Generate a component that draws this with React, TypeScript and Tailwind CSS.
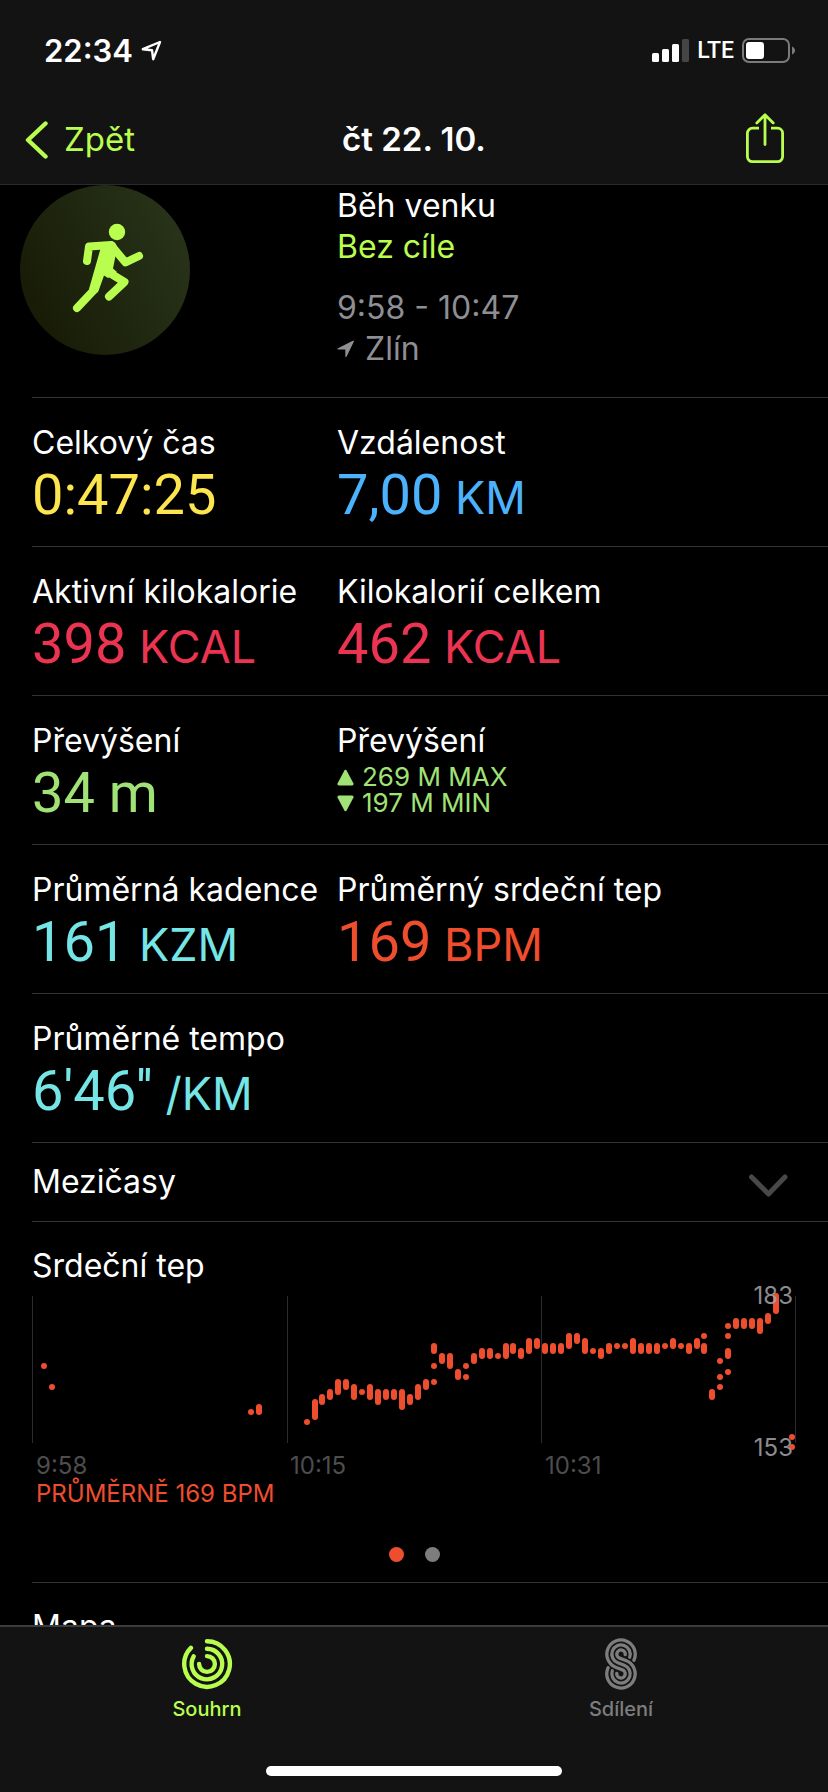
import type { ReactNode } from 'react';

interface Metric {
  label: string;
  value: string;
  unit?: string;
  color: string;
}

// [x, top, bottom] of every heart rate sample range
const HEART_RATE: [number, number, number][] = [
  [12, 77, 83], [20, 98, 104], [219, 123, 129], [227, 118, 129],
  [275, 133, 139], [283, 113, 134], [290, 108, 119], [298, 103, 114],
  [306, 93, 109], [314, 93, 104], [322, 98, 114], [330, 103, 109],
  [338, 98, 114], [346, 103, 119], [354, 103, 114], [362, 103, 114],
  [370, 103, 124], [378, 108, 119], [386, 98, 114], [394, 93, 104],
  [402, 93, 99], [402, 77, 83], [402, 57, 68], [410, 67, 78],
  [418, 67, 83], [426, 83, 94], [434, 77, 83], [434, 88, 94],
  [442, 67, 78], [450, 62, 73], [458, 62, 73], [466, 67, 73],
  [474, 57, 73], [481, 57, 68], [489, 62, 73], [497, 52, 68],
  [505, 52, 63], [513, 57, 68], [521, 57, 68], [529, 57, 68],
  [537, 47, 63], [545, 47, 58], [553, 52, 68], [561, 62, 68],
  [569, 62, 73], [577, 57, 68], [585, 57, 63], [593, 57, 63],
  [601, 52, 68], [609, 57, 68], [617, 57, 68], [625, 57, 68],
  [633, 57, 63], [641, 52, 63], [649, 57, 63], [657, 57, 68],
  [665, 52, 63], [672, 47, 53], [672, 57, 68], [680, 103, 114],
  [688, 72, 78], [688, 88, 94], [688, 98, 104], [696, 37, 43],
  [696, 47, 53], [696, 62, 73], [696, 83, 89], [704, 32, 43],
  [712, 32, 43], [720, 32, 43], [728, 32, 48], [736, 27, 38],
  [744, 7, 28], [760, 148, 154], [760, 158, 164],
];

const GRID_LINES = [0, 255, 509, 763];

function StatusBar() {
  return (
    <div className="flex h-[88px] items-center justify-between pt-[13px] pr-8 pl-11">
      <div className="flex items-center gap-2">
        <span className="text-[31px] leading-9 font-semibold">22:34</span>
        <svg width="21" height="21" viewBox="0 0 21 21" fill="none" stroke="currentColor" strokeWidth="2.4" strokeLinejoin="round">
          <path d="M19 2 1.8 9.2 11 10.2 12.2 19.2Z" />
        </svg>
      </div>
      <div className="flex items-center gap-2">
        <svg width="37" height="23" viewBox="0 0 37 23" fill="currentColor">
          <rect x="0" y="14" width="7" height="9" rx="1.5" />
          <rect x="10" y="10" width="7" height="13" rx="1.5" />
          <rect x="20" y="5" width="7" height="18" rx="1.5" />
          <rect x="30" y="0" width="7" height="23" rx="1.5" fill="#454545" />
        </svg>
        <span className="font-['Roboto',sans-serif] text-[23px] leading-7 font-medium">LTE</span>
        <svg width="54" height="25" viewBox="0 0 54 25">
          <rect x="1" y="1" width="46" height="23" rx="6" fill="none" stroke="#7b7b7b" strokeWidth="2" />
          <rect x="4" y="4" width="18" height="17" rx="3" fill="#fff" />
          <path d="M50 8.5C54 10 54 15 50 16.5Z" fill="#7b7b7b" />
        </svg>
      </div>
    </div>
  );
}

function NavBar() {
  return (
    <div className="grid h-24 grid-cols-3 items-center px-6 pt-2">
      <button className="flex items-center gap-4 justify-self-start text-[33px] text-[#b9fe4f]">
        <svg width="24" height="38" viewBox="0 0 24 38" fill="none" stroke="currentColor" strokeWidth="4.4" strokeLinecap="round" strokeLinejoin="round">
          <path d="M21.5 2.5 4 19 21.5 35.5" />
        </svg>
        Zpět
      </button>
      <h1 className="text-center text-[33px] font-semibold">čt 22. 10.</h1>
      <button aria-label="Sdílet" className="justify-self-end pr-5 pb-1 text-[#b9fe4f]">
        <svg width="38" height="50" viewBox="0 0 38 50" fill="none" stroke="currentColor" strokeWidth="2.8" strokeLinecap="round" strokeLinejoin="round">
          <path strokeLinecap="butt" d="M13 15.2H6.4a5 5 0 0 0-5 5V43.6a5 5 0 0 0 5 5H31.6a5 5 0 0 0 5-5V20.2a5 5 0 0 0-5-5H25" />
          <path d="M19 31.5V2M10.8 10 19 1.8 27.2 10" />
        </svg>
      </button>
    </div>
  );
}

function RunnerBadge() {
  return (
    <svg width="170" height="170" viewBox="0 0 170 170" className="-ml-3">
      <defs>
        <linearGradient id="badge" x1="0" y1="0.75" x2="1" y2="0.25">
          <stop offset="0" stopColor="#171a05" />
          <stop offset="1" stopColor="#28341a" />
        </linearGradient>
      </defs>
      <circle cx="85" cy="85" r="85" fill="url(#badge)" />
      <g fill="none" stroke="#b9fe4f" strokeWidth="8" strokeLinecap="round" strokeLinejoin="round">
        <path d="M67 76 69 61.500 91 60 105.500 77.500 119 71" />
        <path d="M88 87 104.500 97 89 111.500" />
        <path d="M74 105 57 123" />
      </g>
      <path d="M81 62 91 56C95 56.500 98 60 96.500 66L93 83.500 97 87 88 93 84 90.500 78.500 106Q77 109 74 108L69 104Z" fill="#b9fe4f" />
      <circle cx="97" cy="47" r="8.200" fill="#b9fe4f" />
    </svg>
  );
}

function Section({ children, className = '' }: { children: ReactNode; className?: string }) {
  return <section className={`border-b border-[#333335] ${className}`}>{children}</section>;
}

function MetricCell({ label, value, unit, color }: Metric) {
  return (
    <div>
      <h2 className="text-[32px] leading-10 whitespace-nowrap">{label}</h2>
      <p className={`font-['Roboto',sans-serif] text-[56px] leading-[64px] whitespace-nowrap ${color}`}>
        {value}
        {unit && <span className="font-['Inter',sans-serif] text-[45px] leading-none"> {unit}</span>}
      </p>
    </div>
  );
}

function MetricRow({ children }: { children: ReactNode }) {
  return (
    <Section className="grid grid-cols-[305px_1fr] pt-[25px] pb-[19px]">{children}</Section>
  );
}

function ElevationRange() {
  return (
    <div>
      <h2 className="text-[32px] leading-10">Převýšení</h2>
      <ul className="mt-[3px] text-[26px] leading-[26px] text-[#a1e277]">
        <li className="flex items-center gap-2">
          <svg width="17" height="17" viewBox="0 0 17 17" fill="currentColor">
            <path d="M7.400 1.500Q8.500 0 9.600 1.500L16.500 14.500Q17 16.500 15 16.500H2Q0 16.500 0.500 14.500Z" />
          </svg>
          269 M MAX
        </li>
        <li className="flex items-center gap-2">
          <svg width="17" height="17" viewBox="0 0 17 17" fill="currentColor">
            <path d="M7.400 15.500Q8.500 17 9.600 15.500L16.500 2.500Q17 .5 15 .5H2Q0 .5 .5 2.500Z" />
          </svg>
          197 M MIN
        </li>
      </ul>
    </div>
  );
}

function HeartRateChart() {
  return (
    <svg viewBox="0 0 764 192" className="block w-full overflow-visible text-[24px]">
      {GRID_LINES.map(x => (
        <rect key={x} x={x} y="10" width="1" height="147" fill="#2c2c2e" />
      ))}
      {HEART_RATE.map(([x, top, bottom]) => (
        <rect key={`${x}-${top}`} x={x - 3} y={top} width="6" height={bottom - top} rx="3" fill="#ee4d2e" />
      ))}
      <g fill="#a5a5aa" fillOpacity="0.85" textAnchor="end">
        <text x="761" y="18">183</text>
        <text x="761" y="170">153</text>
      </g>
      <g fill="#4d4d4f">
        <text x="4" y="188">9:58</text>
        <text x="258" y="188">10:15</text>
        <text x="513" y="188">10:31</text>
      </g>
    </svg>
  );
}

function TabBar() {
  return (
    <nav className="border-t-2 border-[#3c3c3d] bg-[#131313]">
      <div className="grid grid-cols-2 pt-[11px] text-[20px] leading-7 font-medium">
        <a href="#souhrn" className="flex flex-col items-center gap-[5px] text-[#b9fe4f]">
          <svg width="52" height="52" viewBox="0 0 52 52" fill="none" stroke="currentColor" strokeWidth="4.400" strokeLinecap="round">
            <path d="M26 3.200A22.800 22.800 0 1 1 9.900 9.900" />
            <path d="M26 10.700A15.300 15.300 0 1 1 12.700 18.300" />
            <path d="M26 18.100A7.900 7.900 0 1 1 18.100 26" />
          </svg>
          Souhrn
        </a>
        <a href="#sdileni" className="flex flex-col items-center gap-[5px] text-[#7d7d7e]">
          <svg width="32" height="52" viewBox="0 0 32 52" fill="none" stroke="currentColor" strokeWidth="3.300" strokeLinecap="round">
            <path d="M28.900 22.200A14.200 14.200 0 1 0 11.100 29.500L17.450 31.900A4.200 4.200 0 1 1 11.800 35.300" />
            <path d="M24.700 19.200A9.200 9.200 0 1 0 12.800 24.800L19.200 27.200A9.200 9.200 0 1 1 7.300 32.800" />
            <path d="M20.200 16.700A4.200 4.200 0 1 0 14.550 20.100L20.900 22.500A14.200 14.200 0 1 1 3.100 29.800" />
          </svg>
          Sdílení
        </a>
      </div>
      <div className="mx-auto mt-[43px] mb-4 h-[10px] w-[296px] rounded-full bg-white" />
    </nav>
  );
}

export default function App() {
  return (
    <div className="flex h-screen flex-col bg-black font-['Inter','Liberation_Sans',sans-serif] text-white">
      <header className="border-b border-[#2a2a2b] bg-[#131313]">
        <StatusBar />
        <NavBar />
      </header>

      <main className="min-h-0 flex-1 overflow-hidden pl-8">
        <Section className="grid grid-cols-[305px_1fr] pb-7">
          <RunnerBadge />
          <div className="text-[32px] leading-[41px]">
            <p>Běh venku</p>
            <p className="text-[#b9fe4f]">Bez cíle</p>
            <p className="mt-5 text-[#8e8e93]">9:58 - 10:47</p>
            <p className="flex items-center gap-[10px] text-[#8e8e93]">
              <svg width="18" height="18" viewBox="0 0 18 18" fill="currentColor">
                <path d="M15.800.8Q17.300.3 16.800 1.800L9.500 16.800Q8.500 18 8.300 16.300V9.600H1.400Q-.4 9.200 1 8.200Z" />
              </svg>
              Zlín
            </p>
          </div>
        </Section>

        <MetricRow>
          <MetricCell label="Celkový čas" value="0:47:25" color="text-[#fde550]" />
          <MetricCell label="Vzdálenost" value="7,00" unit="KM" color="text-[#4cb2fb]" />
        </MetricRow>
        <MetricRow>
          <MetricCell label="Aktivní kilokalorie" value="398" unit="KCAL" color="text-[#ea3452]" />
          <MetricCell label="Kilokalorií celkem" value="462" unit="KCAL" color="text-[#ea3452]" />
        </MetricRow>
        <MetricRow>
          <MetricCell label="Převýšení" value="34 m" color="text-[#a1e277]" />
          <ElevationRange />
        </MetricRow>
        <MetricRow>
          <MetricCell label="Průměrná kadence" value="161" unit="KZM" color="text-[#75e6e5]" />
          <MetricCell label="Průměrný srdeční tep" value="169" unit="BPM" color="text-[#ee4d2e]" />
        </MetricRow>
        <MetricRow>
          <MetricCell label="Průměrné tempo" value="6'46''" unit="/KM" color="text-[#75e6e5]" />
        </MetricRow>

        <Section>
          <button className="flex h-[78px] w-full items-center justify-between pr-10 text-left text-[32px]">
            Mezičasy
            <svg width="40" height="24" viewBox="0 0 40 24" fill="none" stroke="#48484a" strokeWidth="5" strokeLinecap="round" strokeLinejoin="round" className="mt-2">
              <path d="M3.500 3 20.500 20 37 3" />
            </svg>
          </button>
        </Section>

        <Section className="pt-6 pr-8 pb-5">
          <h2 className="text-[32px] leading-10">Srdeční tep</h2>
          <HeartRateChart />
          <p className="pl-1 text-[24px] leading-8 text-[#ee4d2e]">PRŮMĚRNĚ 169 BPM</p>
          <div className="mt-[37px] flex justify-center gap-[21px]">
            <span className="size-[15px] rounded-full bg-[#ee4d2e]" />
            <span className="size-[15px] rounded-full bg-[#7d7d7e]" />
          </div>
        </Section>

        <section className="pt-6">
          <h2 className="text-[32px] leading-10">Mapa</h2>
        </section>
      </main>

      <TabBar />
    </div>
  );
}
